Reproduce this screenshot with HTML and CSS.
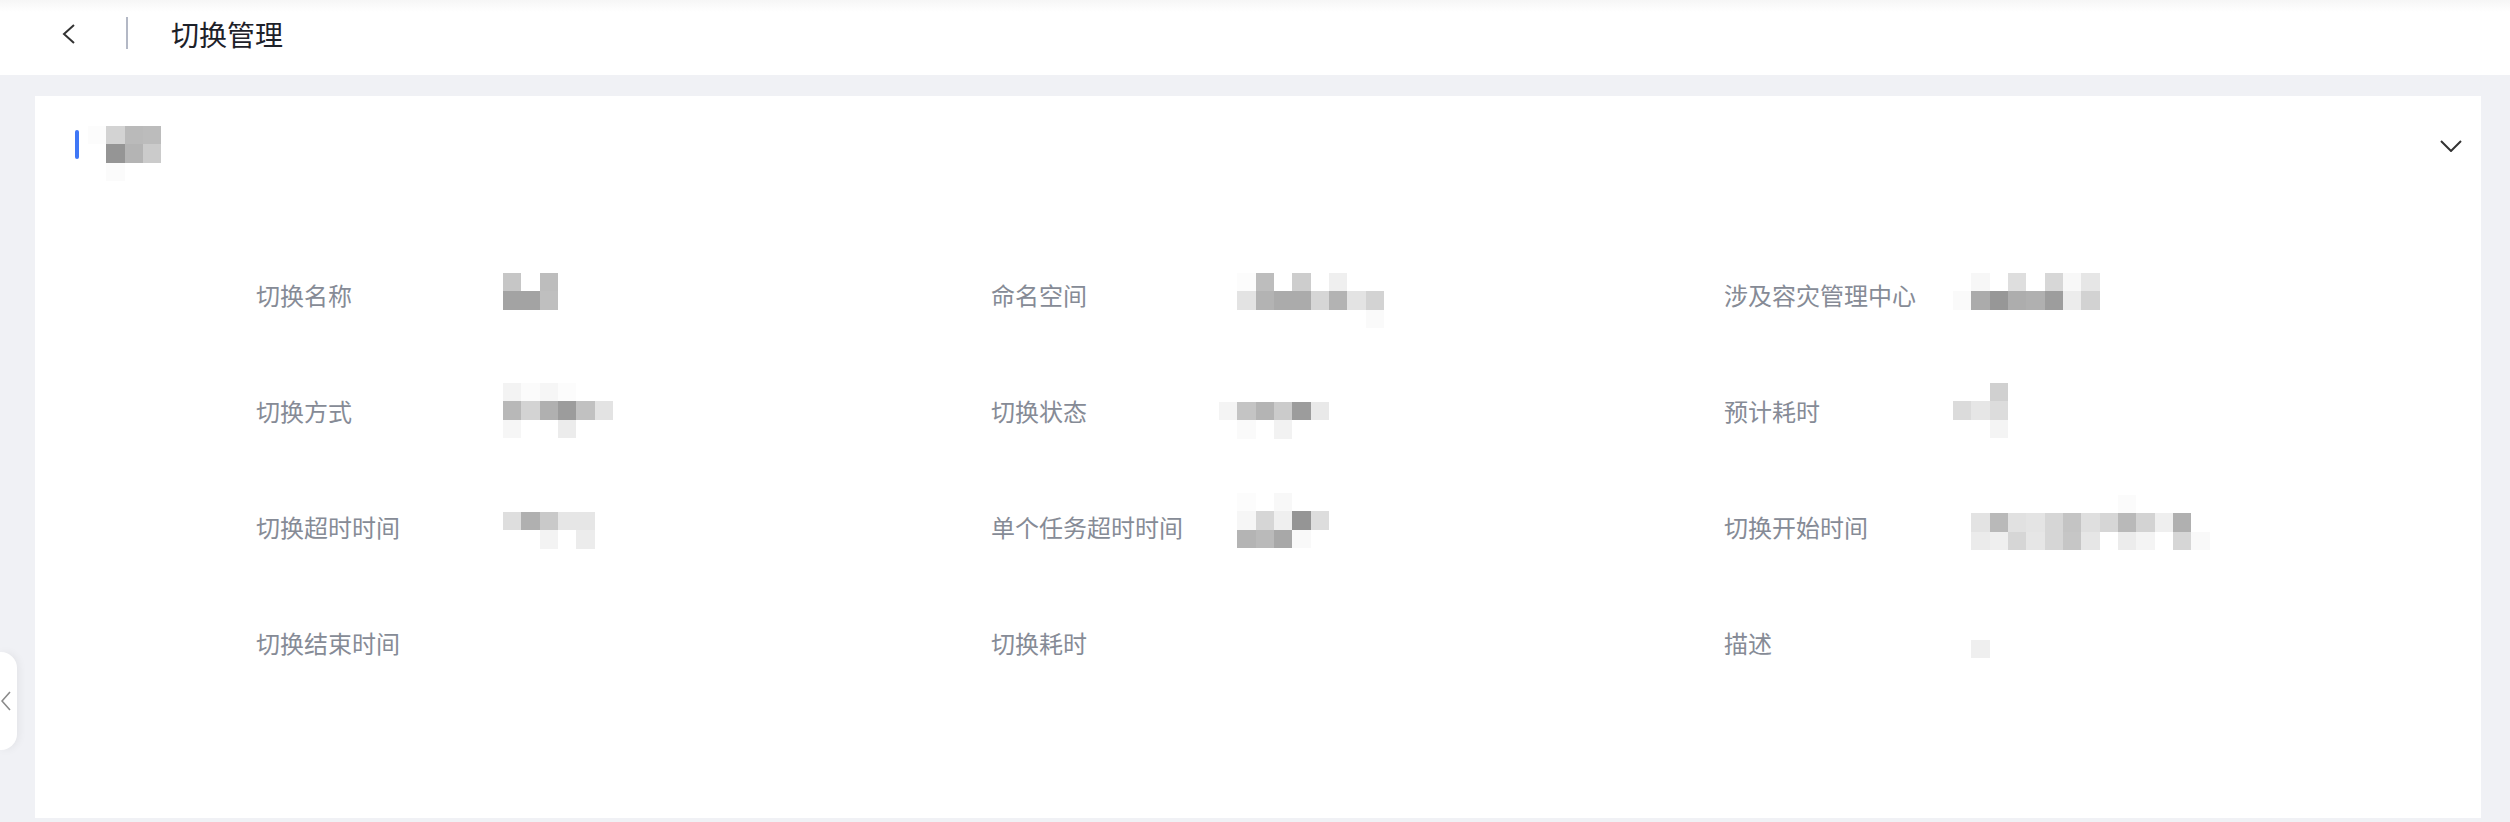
FILE: index.html
```html
<!DOCTYPE html>
<html lang="zh-CN">
<head>
  <meta charset="UTF-8" />
  <meta name="viewport" content="width=device-width, initial-scale=1.0"/>
  <title>切换管理</title>
  <link rel="stylesheet" href="styles.css">
</head>
<body>
  <header class="topbar">
    <button class="back-btn" aria-label="返回">
      <svg width="14" height="20" viewBox="0 0 14 20"><polyline points="12,1 2,10 12,19" fill="none" stroke="#333" stroke-width="2"/></svg>
    </button>
    <span class="divider"></span>
    <h1 class="page-title">切换管理</h1>
  </header>

  <div class="side-tab">
    <svg width="10" height="20" viewBox="0 0 10 20"><polyline points="9,1 1,10 9,19" fill="none" stroke="#8a8a8a" stroke-width="1.6"/></svg>
  </div>

  <main class="card">
    <div class="card-head">
      <span class="mark"></span>
      <div class="mosaic title-mosaic" data-top="-4" data-rows="fc d3 ba bc|. 95 b4 cb|. fb . ."></div>
      <svg class="collapse" width="22" height="12" viewBox="0 0 22 12"><polyline points="1,1 11,11 21,1" fill="none" stroke="#333" stroke-width="2"/></svg>
    </div>

    <div class="fields">
      <div class="label">切换名称</div>
      <div class="value"><div class="mosaic" data-top="-6" data-rows="c6 . bd|a3 a3 bf"></div></div>
      <div class="label">命名空间</div>
      <div class="value"><div class="mosaic" data-top="-6" data-rows=". fc bd . cd . ef . .|. e3 b3 ab ab d6 b3 e3 d3|. . . . . . . . fa"></div></div>
      <div class="label">涉及容灾管理中心</div>
      <div class="value"><div class="mosaic" data-top="-6" data-rows=". f7 . de . d7 f8 e6|fa ab 97 ad b0 9d ec d2"></div></div>

      <div class="label">切换方式</div>
      <div class="value"><div class="mosaic" data-top="-12" data-rows="f3 fb f6 fc . .|b8 d3 b0 9c c1 e3|f6 . . ec . ."></div></div>
      <div class="label">切换状态</div>
      <div class="value"><div class="mosaic" data-top="7" data-rows="f4 c4 b4 cb 9c e9|. fa . f2 . ."></div></div>
      <div class="label">预计耗时</div>
      <div class="value"><div class="mosaic" data-top="-12" data-rows=". . d0|db e6 dc|. . f4"></div></div>

      <div class="label">切换超时时间</div>
      <div class="value"><div class="mosaic" data-top="1" data-rows="de b0 c9 e6 e6|. . f3 . ec"></div></div>
      <div class="label">单个任务超时时间</div>
      <div class="value"><div class="mosaic" data-top="-18" data-rows=". fc . f8 . .|. f6 d6 ef 95 dd|. b4 ba a8 f9 ."></div></div>
      <div class="label">切换开始时间</div>
      <div class="value"><div class="mosaic" data-top="-16" data-rows=". . . . . . . . . fb|. e3 b9 e1 e4 d6 c4 df d6 b9 d3 ef b0|. eb ef d6 e6 d6 c6 e6 . ec f4 . d6 f9"></div></div>

      <div class="label">切换结束时间</div>
      <div class="value"></div>
      <div class="label">切换耗时</div>
      <div class="value"></div>
      <div class="label">描述</div>
      <div class="value"><div class="mosaic" data-top="13" data-rows=". ef"></div></div>
    </div>
  </main>

  <script>
    // masked values are drawn as blocks of grey cells
    document.querySelectorAll('.mosaic').forEach(m => {
      m.style.marginTop = m.dataset.top + 'px';
      m.dataset.rows.split('|').forEach(row => {
        const r = document.createElement('div');
        r.className = 'mosaic-row';
        row.trim().split(/\s+/).forEach(c => {
          const s = document.createElement('span');
          if (c !== '.') s.style.background = '#' + c + c + c;
          r.appendChild(s);
        });
        m.appendChild(r);
      });
    });
  </script>
</body>
</html>
```

FILE: styles.css
```css
body { margin: 0; background: #f0f1f5; font-family: "Noto Sans CJK SC", "Noto Sans", sans-serif; height: 822px; overflow: hidden; position: relative; }

.topbar {
  height: 75px;
  background: linear-gradient(#f6f6f6 0, #fff 12px);
  display: flex;
  align-items: center;
  padding-left: 62px;
  box-sizing: border-box;
}
.back-btn { border: none; background: none; padding: 0; width: 14px; height: 20px; display: flex; margin-top: -8px; cursor: pointer; }
.divider { width: 2px; height: 32px; background: #b3b8c5; margin: -10px 43px 0 50px; }
.page-title { margin: -7px 0 0; font-size: 28px; font-weight: 400; color: #1d2129; line-height: 40px; }

.side-tab {
  position: absolute;
  left: 0;
  top: 652px;
  width: 17px;
  height: 98px;
  background: #fff;
  border-radius: 0 16px 16px 0;
  box-shadow: 2px 0 8px rgba(0, 0, 0, 0.06);
  display: flex;
  align-items: center;
  padding-left: 1px;
  box-sizing: border-box;
}

.card {
  margin: 21px 29px 0 35px;
  height: 722px;
  background: #fff;
  padding: 34px 19px 0 40px;
  box-sizing: border-box;
}
.card-head { display: flex; align-items: flex-start; height: 48px; }
.mark { width: 4px; height: 29px; background: #3f77f6; border-radius: 2px; }
.title-mosaic { margin-left: 9px; }
.collapse { margin: 10px 0 0 auto; }

.fields {
  display: grid;
  grid-template-columns: 247px 488px 228px 505px 229px 1fr;
  grid-auto-rows: 116px;
  margin: 101px 0 0 181px;
}
.label { font-size: 24px; line-height: 32px; color: #868b96; white-space: nowrap; }
.value { display: flex; align-items: flex-start; }

.mosaic-row { display: flex; }
.mosaic-row span { width: 18.33px; height: 18.33px; }
```
